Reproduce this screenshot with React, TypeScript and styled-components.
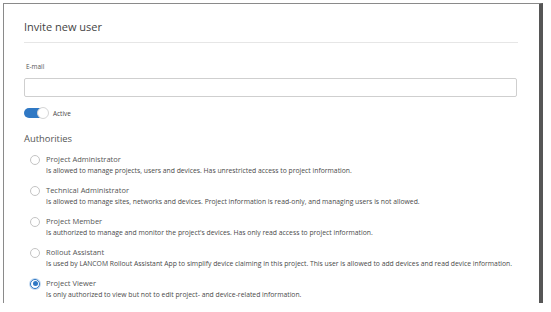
import { createGlobalStyle, styled } from 'styled-components'

const GlobalStyle = createGlobalStyle`
  html, body {
    margin: 0;
    padding: 0;
    background: #ffffff;
    font-family: "Open Sans", "Noto Sans", sans-serif;
  }
`

const Modal = styled.div`
  box-sizing: border-box;
  margin: 3px 0 0 3px;
  width: 540px;
  height: 300px;
  background: #ffffff;
  border-left: 1px solid #8a8a8a;
  border-top: 1px solid #8a8a8a;
  border-right: 4px solid #565656;
  padding: 0 21px 0 20px;
  overflow: hidden;
`

const Header = styled.div`
  padding: 14px 0 6px;
  border-bottom: 1px solid #e6e6e6;
`

const Title = styled.h1`
  margin: 0;
  font-size: 11px;
  line-height: 18px;
  font-weight: 400;
  color: #444444;
`

const Form = styled.div`
  display: flex;
  flex-direction: column;
  padding-top: 19px;
`

const Label = styled.label`
  font-size: 6.4px;
  line-height: 10px;
  color: #555555;
  padding-left: 2px;
  margin-bottom: 6px;
`

const Input = styled.div`
  box-sizing: border-box;
  height: 19px;
  width: 493px;
  border: 1px solid #cfcfcf;
  border-radius: 2px;
  background: #ffffff;
`

const ToggleRow = styled.div`
  display: flex;
  align-items: center;
  gap: 5px;
  margin-top: 11px;
  height: 10px;
`

const Track = styled.div<{ $on: boolean }>`
  position: relative;
  width: 24px;
  height: 10px;
  border-radius: 5px;
  background: ${({ $on }) => ($on ? '#2f78c4' : '#cccccc')};
`

const Knob = styled.div<{ $on: boolean }>`
  position: absolute;
  top: -1px;
  ${({ $on }) => ($on ? 'right: -1px;' : 'left: -1px;')}
  box-sizing: border-box;
  width: 12px;
  height: 12px;
  border-radius: 50%;
  background: #ffffff;
  border: 1px solid #d6d6d6;
`

const SmallText = styled.span`
  font-size: 6.4px;
  color: #444444;
`

const SectionTitle = styled.h2`
  margin: 14px 0 0;
  font-size: 9.4px;
  line-height: 14px;
  font-weight: 400;
  color: #555555;
`

const RoleList = styled.div`
  display: flex;
  flex-direction: column;
  gap: 9px;
  margin-top: 8px;
  padding-left: 6px;
`

const Role = styled.div`
  display: grid;
  grid-template-columns: 10px 1fr;
  column-gap: 6px;
  align-items: center;
`

const Radio = styled.span<{ $checked: boolean }>`
  box-sizing: border-box;
  width: 10px;
  height: 10px;
  border-radius: 50%;
  border: 1px solid ${({ $checked }) => ($checked ? '#2f78c4' : '#c4c4c4')};
  background: #ffffff;
  display: flex;
  align-items: center;
  justify-content: center;
  ${({ $checked }) => ($checked ? 'box-shadow: 0 0 0 1px #c6dbf1;' : '')}

  &::after {
    content: '';
    width: 5px;
    height: 5px;
    border-radius: 50%;
    background: ${({ $checked }) => ($checked ? '#2f78c4' : 'transparent')};
  }
`

const RoleName = styled.div`
  font-size: 7.5px;
  line-height: 11px;
  color: #555555;
`

const RoleDesc = styled.div`
  grid-column: 2;
  font-size: 6.8px;
  line-height: 11px;
  color: #4a4a4a;
  white-space: nowrap;
`

const roles = [
  {
    name: 'Project Administrator',
    desc: 'Is allowed to manage projects, users and devices. Has unrestricted access to project information.',
  },
  {
    name: 'Technical Administrator',
    desc: 'Is allowed to manage sites, networks and devices. Project information is read-only, and managing users is not allowed.',
  },
  {
    name: 'Project Member',
    desc: "Is authorized to manage and monitor the project's devices. Has only read access to project information.",
  },
  {
    name: 'Rollout Assistant',
    desc: 'Is used by LANCOM Rollout Assistant App to simplify device claiming in this project. This user is allowed to add devices and read device information.',
  },
  {
    name: 'Project Viewer',
    desc: 'Is only authorized to view but not to edit project- and device-related information.',
  },
]

const App = () => {
  const selected = 'Project Viewer'

  return (
    <>
      <GlobalStyle />
      <Modal>
        <Header>
          <Title>Invite new user</Title>
        </Header>
        <Form>
          <Label>E-mail</Label>
          <Input />
          <ToggleRow>
            <Track $on>
              <Knob $on />
            </Track>
            <SmallText>Active</SmallText>
          </ToggleRow>
          <SectionTitle>Authorities</SectionTitle>
          <RoleList>
            {roles.map((role) => (
              <Role key={role.name}>
                <Radio $checked={role.name === selected} />
                <RoleName>{role.name}</RoleName>
                <RoleDesc>{role.desc}</RoleDesc>
              </Role>
            ))}
          </RoleList>
        </Form>
      </Modal>
    </>
  )
}

export default App
